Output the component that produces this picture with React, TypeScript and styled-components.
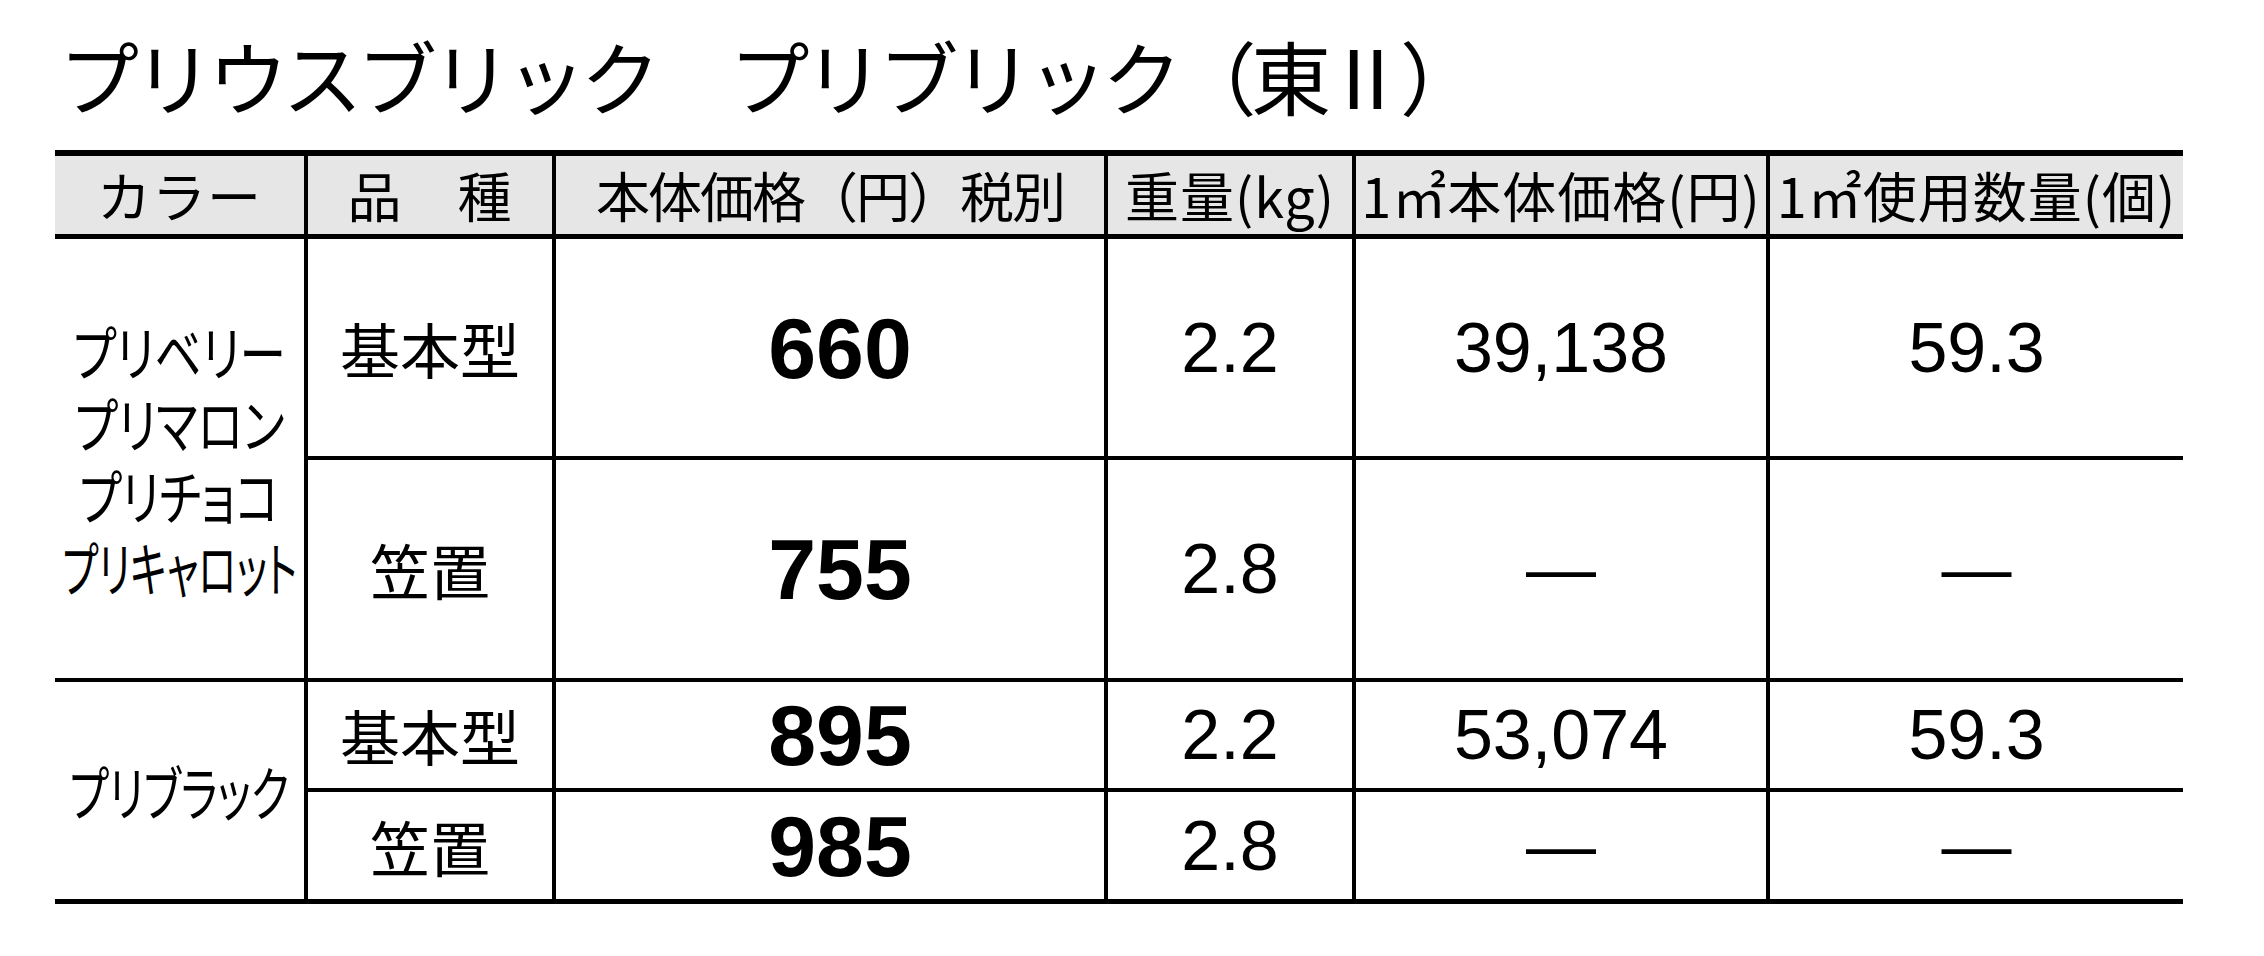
import React from 'react';
import styled, { createGlobalStyle } from 'styled-components';

const GlobalStyle = createGlobalStyle`
  html, body {
    margin: 0;
    padding: 0;
    background: #fff;
  }
  body {
    font-family: "Noto Sans CJK JP", sans-serif;
    color: #000;
  }
`;

type Item = {
  kind: string;
  price: string;
  weight: string;
  areaPrice: string;
  count: string;
  border: number;
};

type Color = {
  name: string;
  squeeze: number;
};

type Group = {
  colors: Color[];
  items: Item[];
};

const groups: Group[] = [
  {
    colors: [
      { name: 'プリベリー', squeeze: 0.79 },
      { name: 'プリマロン', squeeze: 0.79 },
      { name: 'プリチョコ', squeeze: 0.78 },
      { name: 'プリキャロット', squeeze: 0.66 },
    ],
    items: [
      { kind: '基本型', price: '660', weight: '2.2', areaPrice: '39,138', count: '59.3', border: 4 },
      { kind: '笠置', price: '755', weight: '2.8', areaPrice: '—', count: '—', border: 4 },
    ],
  },
  {
    colors: [{ name: 'プリブラック', squeeze: 0.72 }],
    items: [
      { kind: '基本型', price: '895', weight: '2.2', areaPrice: '53,074', count: '59.3', border: 4 },
      { kind: '笠置', price: '985', weight: '2.8', areaPrice: '—', count: '—', border: 5 },
    ],
  },
];

const headers = [
  { label: 'カラー', tight: false },
  { label: '品　種', tight: false },
  { label: '本体価格（円）税別', tight: true },
  { label: '重量(kg)', tight: false },
  { label: '1㎡本体価格(円)', tight: false },
  { label: '1㎡使用数量(個)', tight: false },
];

const App: React.FC = () => {
  return (
    <Page>
      <GlobalStyle />
      <Title>プリウスブリック　プリブリック（東Ⅱ）</Title>
      <Table>
        {headers.map((h, i) => (
          <HeadCell key={h.label} $first={i === 0} $tight={h.tight}>
            {h.label}
          </HeadCell>
        ))}
        {groups.map((g, gi) =>
          g.items.map((it, ii) => (
            <React.Fragment key={`${gi}-${ii}`}>
              {ii === 0 && (
                <ColorCell $span={g.items.length} $border={g.items[g.items.length - 1].border}>
                  {g.colors.map((c) => (
                    <ColorLine key={c.name} $squeeze={c.squeeze}>
                      {c.name}
                    </ColorLine>
                  ))}
                </ColorCell>
              )}
              <KindCell $border={it.border}>{it.kind}</KindCell>
              <PriceCell $border={it.border}>{it.price}</PriceCell>
              <NumCell $border={it.border}>{it.weight}</NumCell>
              <NumCell $border={it.border}>{it.areaPrice}</NumCell>
              <NumCell $border={it.border}>{it.count}</NumCell>
            </React.Fragment>
          ))
        )}
      </Table>
    </Page>
  );
};

export default App;

const Page = styled.div`
  padding: 0 0 0 55px;
  width: 2264px;
  box-sizing: border-box;
`;

const Title = styled.h1`
  margin: 0;
  padding: 34px 0 0 4px;
  height: 150px;
  box-sizing: border-box;
  font-family: "Noto Sans CJK JP", sans-serif;
  font-weight: 400;
  font-size: 80px;
  line-height: 80px;
  letter-spacing: -5.5px;
  white-space: nowrap;
`;

const Table = styled.div`
  display: grid;
  width: 2128px;
  grid-template-columns: 249px 248px 552px 248px 414px 417px;
  grid-template-rows: 83px 221px 222px 110px 112px;
  border-top: 6px solid #000;
`;

const Cell = styled.div<{ $first?: boolean; $border?: number }>`
  box-sizing: border-box;
  display: flex;
  align-items: center;
  justify-content: center;
  border-left: ${(p) => (p.$first ? 'none' : '4px solid #000')};
  border-bottom: ${(p) => p.$border ?? 4}px solid #000;
  white-space: nowrap;
`;

const HeadCell = styled(Cell).attrs({ $border: 5 })<{ $tight?: boolean }>`
  background: #e6e6e6;
  font-size: 54px;
  line-height: 1;
  letter-spacing: ${(p) => (p.$tight ? '-2px' : '1px')};
`;

const ColorCell = styled(Cell).attrs({ $first: true })<{ $span: number }>`
  grid-row: span ${(p) => p.$span};
  flex-direction: column;
`;

const ColorLine = styled.span<{ $squeeze: number }>`
  display: block;
  font-size: 59px;
  line-height: 72px;
  font-feature-settings: "palt";
  transform: scaleX(${(p) => p.$squeeze});
`;

const KindCell = styled(Cell)`
  font-size: 60px;
  line-height: 1;
`;

const PriceCell = styled(Cell)`
  font-family: "Liberation Sans", Arial, sans-serif;
  font-weight: 700;
  font-size: 86px;
  line-height: 1;
  padding-left: 20px;
`;

const NumCell = styled(Cell)`
  font-family: "Liberation Sans", Arial, sans-serif;
  font-size: 70px;
  line-height: 1;
`;
